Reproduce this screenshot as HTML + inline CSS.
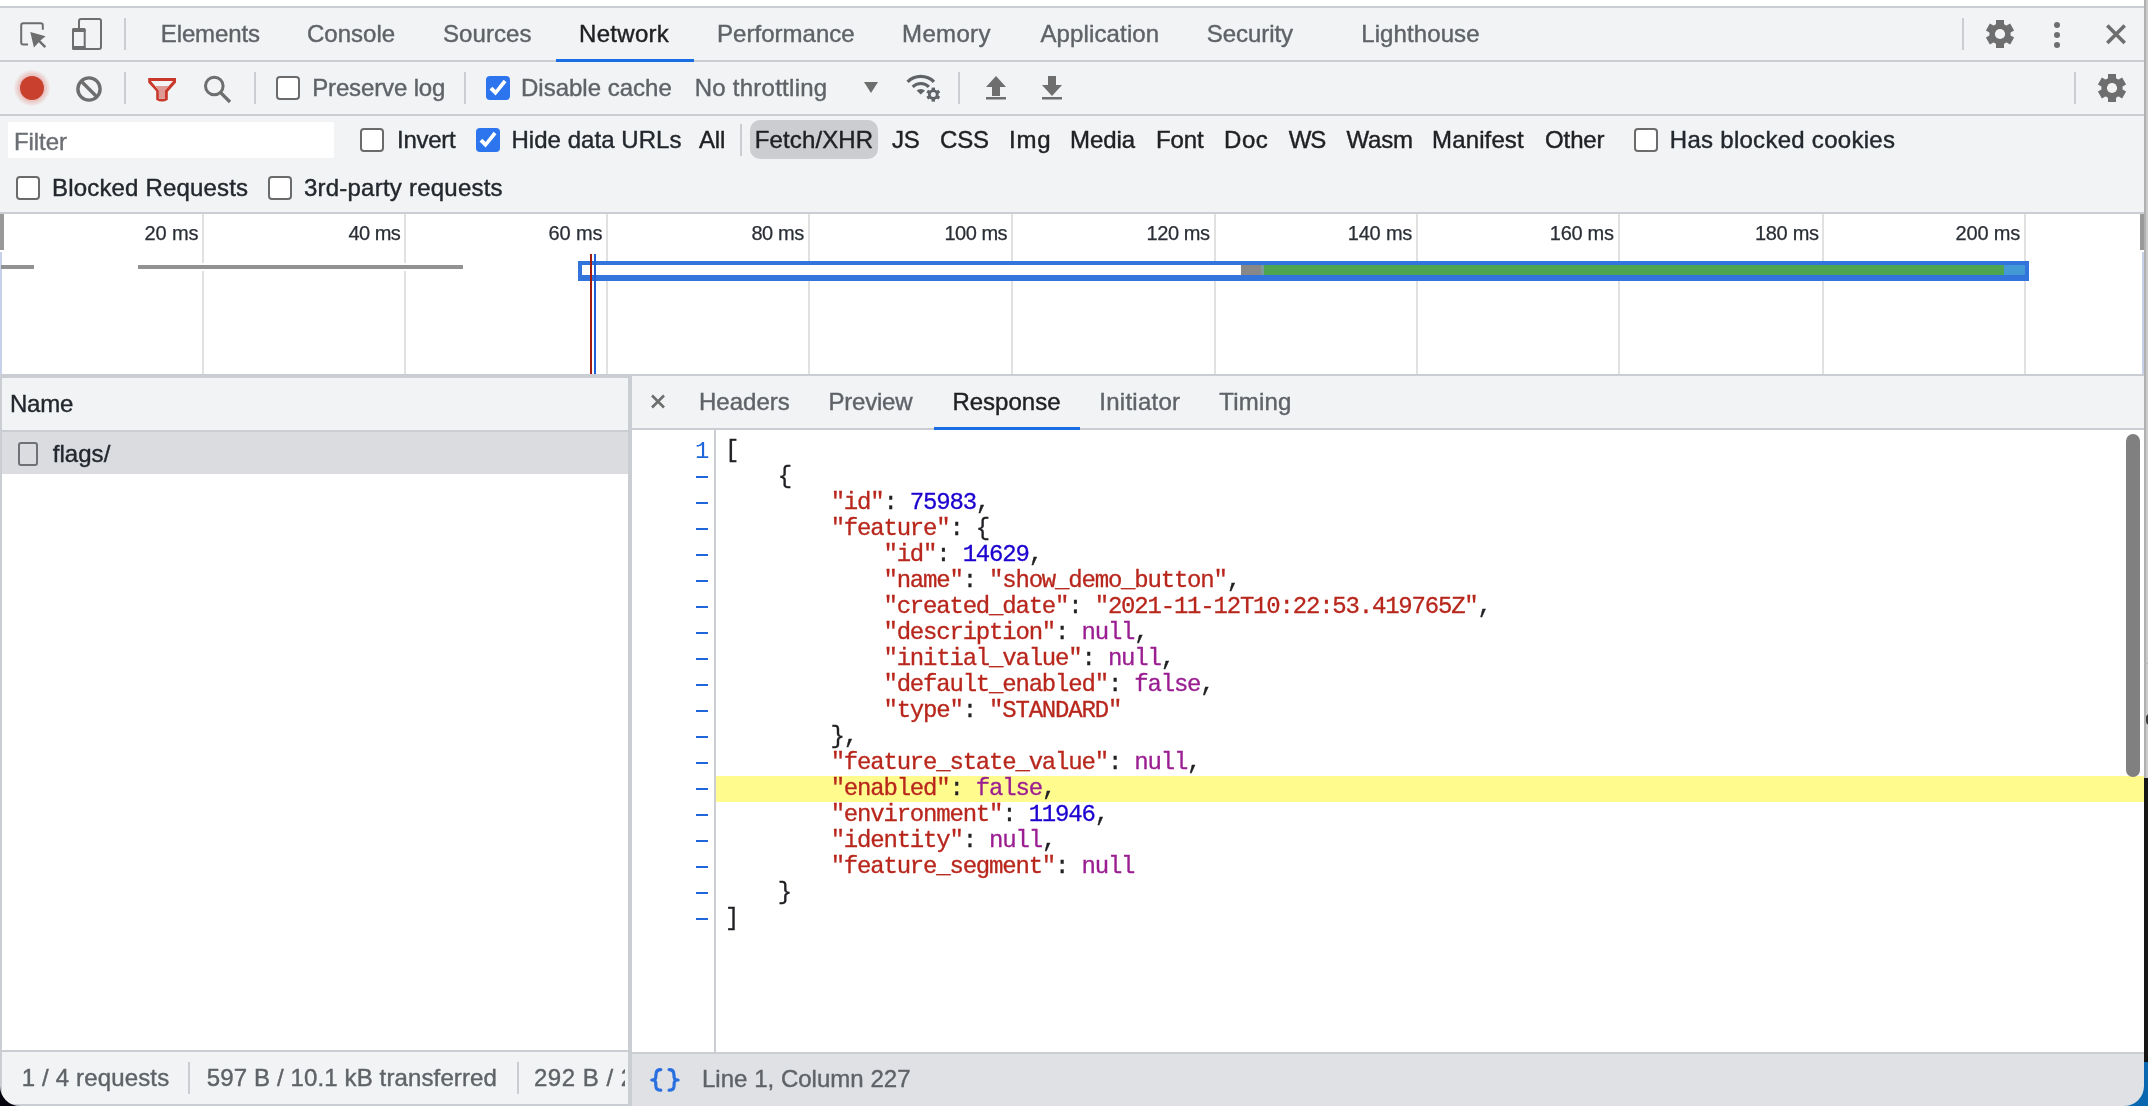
<!DOCTYPE html>
<html><head><meta charset="utf-8">
<style>
*{box-sizing:border-box;margin:0;padding:0}
html,body{width:2148px;height:1106px;overflow:hidden;background:#fff}
body{position:relative;font-family:"Liberation Sans",sans-serif}
#root{position:absolute;left:0;top:0;width:2148px;height:1106px;will-change:transform;opacity:0.999}
.a{position:absolute}
.bg{background:#f1f3f4}
.bd{background:#cacdd1}
.t{position:absolute;white-space:nowrap;font-size:24px;line-height:24px;color:#5f6368;margin-left:-1px;-webkit-text-stroke:0.4px currentColor;letter-spacing:-0.15px}
.dk{color:#202124}
.sl{color:#23282e}
.cb{position:absolute;width:24px;height:24px;border:2px solid #6b6b6b;border-radius:4px;background:#fff}
.cbc{position:absolute;width:24px;height:24px;border-radius:4px;background:#2c75ee}
.tl{position:absolute;white-space:nowrap;font-size:20px;line-height:20px;color:#2a2e35;-webkit-text-stroke:0.25px currentColor}
.gl{position:absolute;width:2px;background:#e1e1e1}
.code{position:absolute;left:725px;top:438px;font-family:"Liberation Mono",monospace;font-size:24px;letter-spacing:-1.2px;line-height:26px;color:#202124;-webkit-text-stroke:0.3px currentColor}
.code div{height:26px;white-space:pre}
.k{color:#b8261c}
.n{color:#1c00cf}
.p{color:#9a1e91}
.ln{position:absolute;left:696px;width:12px;height:2px;background:#1f66db}
</style></head><body><div id="root">

<!-- top white band + outer frame -->
<div class="a bd" style="left:0;top:6px;width:2144px;height:2px"></div>

<!-- TAB BAR -->
<div class="a bg" style="left:0;top:8px;width:2144px;height:52px"></div>
<div class="a bd" style="left:0;top:60px;width:2144px;height:2px"></div>
<svg class="a" style="left:0;top:0" width="140" height="60" viewBox="0 0 140 60">
  <path d="M28 44.6H23.2a2 2 0 0 1-2-2V25.2a2 2 0 0 1 2-2h17.6a2 2 0 0 1 2 2v4.6" fill="none" stroke="#6e6e6e" stroke-width="2"/>
  <path d="M30.3 31.9L45.6 36.2L40.4 40.6L46.2 46.2L44.4 48L38.8 42.3L33.9 47.6Z" fill="#6e6e6e"/>
  <rect x="79" y="19" width="22" height="30" rx="2" fill="none" stroke="#6e6e6e" stroke-width="2"/>
  <rect x="73" y="29" width="11.7" height="20" rx="2" fill="#f1f3f4" stroke="#6e6e6e" stroke-width="2"/>
  <rect x="72" y="28" width="13.7" height="4" rx="1.5" fill="#6e6e6e"/>
  <rect x="72" y="46" width="13.7" height="4" rx="1.5" fill="#6e6e6e"/>
  <rect x="124" y="18" width="2" height="32" fill="#cacdd1"/>
</svg>
<div class="t" style="left:161.8px;top:22px;letter-spacing:-0.122px">Elements</div>
<div class="t" style="left:308px;top:22px;letter-spacing:0.017px">Console</div>
<div class="t" style="left:443.9px;top:22px;letter-spacing:0.1px">Sources</div>
<div class="t dk" style="left:580px;top:22px;letter-spacing:0.299px">Network</div>
<div class="t" style="left:718px;top:22px;letter-spacing:0.03px">Performance</div>
<div class="t" style="left:903.1px;top:22px;letter-spacing:0.33px">Memory</div>
<div class="t" style="left:1041.4px;top:22px;letter-spacing:0.14px">Application</div>
<div class="t" style="left:1207.7px;top:22px;letter-spacing:-0.049px">Security</div>
<div class="t" style="left:1362.2px;top:22px;letter-spacing:0.105px">Lighthouse</div>
<div class="a" style="left:556px;top:59px;width:138px;height:3px;background:#1a6ee3"></div>
<svg class="a" style="left:1950px;top:8px" width="194" height="52" viewBox="1950 8 194 52">
  <rect x="1962" y="18" width="2" height="32" fill="#cacdd1"/>
  <g transform="translate(2000 34)" fill="#6e6e6e"><circle r="10.6"/><rect x="-4" y="-14" width="8" height="28"/><rect x="-4" y="-14" width="8" height="28" transform="rotate(60)"/><rect x="-4" y="-14" width="8" height="28" transform="rotate(120)"/><circle r="5.1" fill="#f1f3f4"/></g>
  <circle cx="2057" cy="25" r="3" fill="#6e6e6e"/>
  <circle cx="2057" cy="35" r="3" fill="#6e6e6e"/>
  <circle cx="2057" cy="45" r="3" fill="#6e6e6e"/>
  <path d="M2107.3 25.5L2124.7 42.9M2124.7 25.5L2107.3 42.9" stroke="#6e6e6e" stroke-width="3.6"/>
</svg>

<!-- TOOLBAR -->
<div class="a bg" style="left:0;top:62px;width:2144px;height:52px"></div>
<div class="a bd" style="left:0;top:114px;width:2144px;height:2px"></div>
<svg class="a" style="left:0;top:62px" width="1100" height="52" viewBox="0 62 1100 52">
  <defs><radialGradient id="rg"><stop offset="0.62" stop-color="#d04030" stop-opacity="0.32"/><stop offset="1" stop-color="#d93025" stop-opacity="0"/></radialGradient></defs>
  <circle cx="32" cy="88" r="18.5" fill="url(#rg)"/>
  <circle cx="32" cy="88" r="12" fill="#c9402f"/>
  <circle cx="89" cy="89" r="11.1" fill="none" stroke="#6e6e6e" stroke-width="3.4"/>
  <path d="M81 81L97 97" stroke="#6e6e6e" stroke-width="3.4"/>
  <rect x="124" y="72" width="2" height="32" fill="#cacdd1"/>
  <path d="M148.2 78H176V82.5L167.8 91.7V99.7Q162 103.4 156.2 99.7V91.2L148.2 82.5Z" fill="#c9382b"/>
  <path d="M150.9 80.9H173.1L165 90.3V98.8H158.9V90.5Z" fill="#f1f3f4"/>
  <path d="M155.15 86H168.7L165 90.3V98.8H158.9V90.5Z" fill="#dd9a94"/>
  <circle cx="214.3" cy="86" r="8.8" fill="none" stroke="#6e6e6e" stroke-width="3"/>
  <path d="M220.5 92.5L230 102" stroke="#6e6e6e" stroke-width="3.2"/>
  <rect x="254" y="72" width="2" height="32" fill="#cacdd1"/>
  <rect x="464" y="72" width="2" height="32" fill="#cacdd1"/>
  <path d="M864 82H878L871 93Z" fill="#6e6e6e"/>
  <g fill="#5f6368">
    <path d="M906.45 80.65A20.3 20.3 0 0 1 935.15 80.65L932.82 82.98A17 17 0 0 0 908.78 82.98Z"/>
    <path d="M911.61 85.81A13 13 0 0 1 929.99 85.81L927.87 87.93A10 10 0 0 0 913.73 87.93Z"/>
    <path d="M920.8 94.6L916.6 90.6A6 6 0 0 1 925 90.6Z"/>
  </g>
  <circle cx="933.3" cy="94.6" r="8.6" fill="#f1f3f4"/>
  <g transform="translate(933.3 94.6)" fill="#5f6368">
    <circle r="5.3"/>
    <rect x="-1.7" y="-7" width="3.4" height="14"/>
    <rect x="-1.7" y="-7" width="3.4" height="14" transform="rotate(60)"/>
    <rect x="-1.7" y="-7" width="3.4" height="14" transform="rotate(120)"/>
    <circle r="2.5" fill="#f1f3f4"/>
  </g>
  <rect x="958" y="72" width="2" height="32" fill="#cacdd1"/>
  <path d="M996 76L1006 87H1000V96H992V87H986Z" fill="#6e6e6e"/>
  <rect x="986" y="97" width="20" height="2.5" fill="#6e6e6e"/>
  <path d="M1048 76H1056V85H1062L1052 96L1042 85H1048Z" fill="#6e6e6e"/>
  <rect x="1042" y="97" width="20" height="2.5" fill="#6e6e6e"/>
</svg>
<div class="cb" style="left:276px;top:76px"></div>
<div class="t" style="left:313.2px;top:76px;letter-spacing:-0.14px">Preserve log</div>
<div class="cbc" style="left:486px;top:76px"><svg width="24" height="24"><path d="M3.5 13.5L6.4 10.8L9.6 13.9L17.6 3.7L20.5 6.3L9.6 19.4Z" fill="#fff"/></svg></div>
<div class="t" style="left:522px;top:76px;letter-spacing:0.001px">Disable cache</div>
<div class="t" style="left:695.7px;top:76px;letter-spacing:0.258px">No throttling</div>
<svg class="a" style="left:2060px;top:62px" width="84" height="52" viewBox="2060 62 84 52">
  <rect x="2074" y="72" width="2" height="32" fill="#cacdd1"/>
  <g transform="translate(2112 88)" fill="#6e6e6e"><circle r="10.6"/><rect x="-4" y="-14" width="8" height="28"/><rect x="-4" y="-14" width="8" height="28" transform="rotate(60)"/><rect x="-4" y="-14" width="8" height="28" transform="rotate(120)"/><circle r="5.1" fill="#f1f3f4"/></g>
</svg>

<!-- FILTER BAR -->
<div class="a bg" style="left:0;top:116px;width:2144px;height:96px"></div>
<div class="a bd" style="left:0;top:212px;width:2144px;height:2px"></div>
<div class="a" style="left:8px;top:122px;width:326px;height:36px;background:#fff"></div>
<div class="t" style="left:15px;top:130px;letter-spacing:-0.07px;color:#6b6f74">Filter</div>
<div class="cb" style="left:360px;top:128px"></div>
<div class="t sl" style="left:398px;top:128px;letter-spacing:-0.25px">Invert</div>
<div class="cbc" style="left:476px;top:128px"><svg width="24" height="24"><path d="M3.5 13.5L6.4 10.8L9.6 13.9L17.6 3.7L20.5 6.3L9.6 19.4Z" fill="#fff"/></svg></div>
<div class="t sl" style="left:512.4px;top:128px;letter-spacing:0.049px">Hide data URLs</div>
<div class="t dk" style="left:700px;top:128px;letter-spacing:-0.15px">All</div>
<div class="a bd" style="left:740px;top:124px;width:2px;height:32px"></div>
<div class="a" style="left:750px;top:120px;width:128px;height:39px;border-radius:10px;background:#cbcdd1"></div>
<div class="t dk" style="left:755.8px;top:128px;letter-spacing:0.125px">Fetch/XHR</div>
<div class="t dk" style="left:893px;top:128px;letter-spacing:-0.15px">JS</div>
<div class="t dk" style="left:941px;top:128px;letter-spacing:-0.15px">CSS</div>
<div class="t dk" style="left:1010px;top:128px;letter-spacing:0.85px">Img</div>
<div class="t dk" style="left:1071px;top:128px;letter-spacing:-0.05px">Media</div>
<div class="t dk" style="left:1157px;top:128px;letter-spacing:-0.15px">Font</div>
<div class="t dk" style="left:1225px;top:128px;letter-spacing:0.55px">Doc</div>
<div class="t dk" style="left:1289.8px;top:128px;letter-spacing:-1.15px">WS</div>
<div class="t dk" style="left:1347.5px;top:128px;letter-spacing:-0.183px">Wasm</div>
<div class="t dk" style="left:1433.1px;top:128px;letter-spacing:0.122px">Manifest</div>
<div class="t dk" style="left:1546.1px;top:128px;letter-spacing:-0.15px">Other</div>
<div class="cb" style="left:1634px;top:128px"></div>
<div class="t sl" style="left:1670.8px;top:128px;letter-spacing:0.277px">Has blocked cookies</div>
<div class="cb" style="left:16px;top:176px"></div>
<div class="t sl" style="left:53px;top:176px;letter-spacing:0.177px">Blocked Requests</div>
<div class="cb" style="left:268px;top:176px"></div>
<div class="t sl" style="left:304.9px;top:176px;letter-spacing:0.232px">3rd-party requests</div>

<!-- TIMELINE -->
<div id="tl" class="a" style="left:0;top:214px;width:2144px;height:160px;background:#fff"></div>
<div class="a" style="left:0;top:214px;width:4px;height:36px;background:#999"></div>
<div class="a" style="left:2140px;top:214px;width:4px;height:36px;background:#999"></div>
<div class="a" style="left:0;top:252px;width:2px;height:122px;background:#c5d2ea"></div>
<div class="a" style="left:2142px;top:252px;width:2px;height:122px;background:#c5d2ea"></div>
<div class="gl" style="left:202px;top:214px;height:160px"></div>
<div class="gl" style="left:404px;top:214px;height:160px"></div>
<div class="gl" style="left:606px;top:214px;height:160px"></div>
<div class="gl" style="left:808px;top:214px;height:160px"></div>
<div class="gl" style="left:1011px;top:214px;height:160px"></div>
<div class="gl" style="left:1214px;top:214px;height:160px"></div>
<div class="gl" style="left:1416px;top:214px;height:160px"></div>
<div class="gl" style="left:1618px;top:214px;height:160px"></div>
<div class="gl" style="left:1822px;top:214px;height:160px"></div>
<div class="gl" style="left:2024px;top:214px;height:160px"></div>
<div class="tl" style="left:144.5px;top:223px;letter-spacing:-0.1px">20 ms</div>
<div class="tl" style="left:348.4px;top:223px;letter-spacing:-0.5px">40 ms</div>
<div class="tl" style="left:548.5px;top:223px;letter-spacing:-0.125px">60 ms</div>
<div class="tl" style="left:751.4px;top:223px;letter-spacing:-0.4px">80 ms</div>
<div class="tl" style="left:944.5px;top:223px;letter-spacing:-0.5px">100 ms</div>
<div class="tl" style="left:1146.4px;top:223px;letter-spacing:-0.38px">120 ms</div>
<div class="tl" style="left:1347.7px;top:223px;letter-spacing:-0.18px">140 ms</div>
<div class="tl" style="left:1549.8px;top:223px;letter-spacing:-0.28px">160 ms</div>
<div class="tl" style="left:1755px;top:223px;letter-spacing:-0.32px">180 ms</div>
<div class="tl" style="left:1955.6px;top:223px;letter-spacing:-0.18px">200 ms</div>
<div class="a" style="left:2px;top:263px;width:34px;height:8px;background:#fff"></div>
<div class="a" style="left:1px;top:265px;width:33px;height:4px;background:#929292"></div>
<div class="a" style="left:136px;top:263px;width:329px;height:8px;background:#fff"></div>
<div class="a" style="left:138px;top:265px;width:325px;height:4px;background:#929292"></div>
<div class="a" style="left:578px;top:261px;width:1451px;height:20px;background:#3273dc"></div>
<div class="a" style="left:582px;top:265px;width:659px;height:10px;background:#fff"></div>
<div class="a" style="left:1241px;top:265px;width:20px;height:10px;background:#888"></div>
<div class="a" style="left:1261px;top:265px;width:3px;height:10px;background:#7b9a9a"></div>
<div class="a" style="left:1264px;top:265px;width:740px;height:10px;background:#4ea54f"></div>
<div class="a" style="left:2004px;top:265px;width:21px;height:10px;background:#4399d6"></div>
<div class="a" style="left:590px;top:254px;width:2px;height:120px;background:#a31b0f"></div>
<div class="a" style="left:594px;top:254px;width:2px;height:120px;background:#1f5fd6"></div>

<!-- SPLIT -->
<div class="a bd" style="left:0;top:374px;width:2144px;height:2px"></div>
<div class="a bd" style="left:0;top:376px;width:628px;height:2px"></div>
<div class="a bd" style="left:628px;top:376px;width:4px;height:730px"></div>
<div class="a bd" style="left:0;top:376px;width:2px;height:730px"></div>
<!-- name panel -->
<div class="a bg" style="left:2px;top:378px;width:626px;height:52px"></div>
<div class="a bd" style="left:2px;top:430px;width:626px;height:2px"></div>
<div class="t sl" style="left:10.9px;top:392px;letter-spacing:-0.15px">Name</div>
<div class="a" style="left:2px;top:432px;width:626px;height:42px;background:#dadce0"></div>
<div class="a" style="left:18px;top:442px;width:20px;height:24px;border:2px solid #6e7277;border-radius:3px"></div>
<div class="t sl" style="left:53.8px;top:442px;letter-spacing:0.03px">flags/</div>
<div class="a" style="left:2px;top:474px;width:626px;height:576px;background:#fff"></div>
<div class="a bd" style="left:2px;top:1050px;width:626px;height:2px"></div>
<div class="a bg" style="left:2px;top:1052px;width:626px;height:52px"></div>
<div class="a bd" style="left:0;top:1104px;width:632px;height:2px"></div>
<div class="t" style="left:22.8px;top:1066px;letter-spacing:0.15px">1 / 4 requests</div>
<div class="a bd" style="left:188px;top:1062px;width:2px;height:32px"></div>
<div class="t" style="left:207.8px;top:1066px;letter-spacing:0.127px">597 B / 10.1 kB transferred</div>
<div class="a bd" style="left:517px;top:1062px;width:2px;height:32px"></div>
<div class="a" style="left:535px;top:1052px;width:89.5px;height:52px;overflow:hidden"><div class="t" style="left:0px;top:14px;letter-spacing:0.5px">292 B / 2.3 kB resources</div></div>

<!-- details panel -->
<div class="a bg" style="left:632px;top:376px;width:1512px;height:52px"></div>
<div class="a bd" style="left:632px;top:428px;width:1512px;height:2px"></div>
<svg class="a" style="left:632px;top:376px" width="60" height="52" viewBox="632 376 60 52"><path d="M652 395.5L664 407.5M664 395.5L652 407.5" stroke="#6e6e6e" stroke-width="2.6"/></svg>
<div class="t" style="left:700px;top:390px;letter-spacing:0.017px">Headers</div>
<div class="t" style="left:829.4px;top:390px;letter-spacing:-0.2px">Preview</div>
<div class="t dk" style="left:953.4px;top:390px;letter-spacing:0.007px">Response</div>
<div class="t" style="left:1100.3px;top:390px;letter-spacing:0.264px">Initiator</div>
<div class="t" style="left:1220.2px;top:390px;letter-spacing:0.21px">Timing</div>
<div class="a" style="left:934px;top:427px;width:146px;height:3px;background:#1a6ee3"></div>

<div class="a bd" style="left:714px;top:430px;width:2px;height:622px"></div>
<div class="a" style="left:716px;top:776px;width:1428px;height:26px;background:#fffb8d"></div>
<div class="a" style="left:695px;top:440px;font-family:'Liberation Mono',monospace;font-size:24px;line-height:24px;color:#1f66db">1</div>
<div id="dashes"></div>
<div class="code">
<div>[</div>
<div>    {</div>
<div>        <span class="k">"id"</span>: <span class="n">75983</span>,</div>
<div>        <span class="k">"feature"</span>: {</div>
<div>            <span class="k">"id"</span>: <span class="n">14629</span>,</div>
<div>            <span class="k">"name"</span>: <span class="k">"show_demo_button"</span>,</div>
<div>            <span class="k">"created_date"</span>: <span class="k">"2021-11-12T10:22:53.419765Z"</span>,</div>
<div>            <span class="k">"description"</span>: <span class="p">null</span>,</div>
<div>            <span class="k">"initial_value"</span>: <span class="p">null</span>,</div>
<div>            <span class="k">"default_enabled"</span>: <span class="p">false</span>,</div>
<div>            <span class="k">"type"</span>: <span class="k">"STANDARD"</span></div>
<div>        },</div>
<div>        <span class="k">"feature_state_value"</span>: <span class="p">null</span>,</div>
<div>        <span class="k">"enabled"</span>: <span class="p">false</span>,</div>
<div>        <span class="k">"environment"</span>: <span class="n">11946</span>,</div>
<div>        <span class="k">"identity"</span>: <span class="p">null</span>,</div>
<div>        <span class="k">"feature_segment"</span>: <span class="p">null</span></div>
<div>    }</div>
<div>]</div>
</div>
<div class="ln" style="top:476px"></div>
<div class="ln" style="top:502px"></div>
<div class="ln" style="top:528px"></div>
<div class="ln" style="top:554px"></div>
<div class="ln" style="top:580px"></div>
<div class="ln" style="top:606px"></div>
<div class="ln" style="top:632px"></div>
<div class="ln" style="top:658px"></div>
<div class="ln" style="top:684px"></div>
<div class="ln" style="top:710px"></div>
<div class="ln" style="top:736px"></div>
<div class="ln" style="top:762px"></div>
<div class="ln" style="top:788px"></div>
<div class="ln" style="top:814px"></div>
<div class="ln" style="top:840px"></div>
<div class="ln" style="top:866px"></div>
<div class="ln" style="top:892px"></div>
<div class="ln" style="top:918px"></div>

<div class="a" style="left:2126px;top:434px;width:14px;height:343px;border-radius:7px;background:#808080"></div>

<div class="a bd" style="left:632px;top:1052px;width:1512px;height:2px"></div>
<div class="a" style="left:632px;top:1054px;width:1512px;height:52px;background:#dfe1e5"></div>
<svg class="a" style="left:640px;top:1058px" width="60" height="42" viewBox="0 0 60 42"><g fill="none" stroke="#2a6fe0" stroke-width="3.2" stroke-linecap="round" stroke-linejoin="round"><path d="M20.8 11.6C17.6 11.6 16.3 12.8 16.1 15.6L15.7 19.6C15.5 21.3 14.3 22 11.8 22C14.3 22 15.5 22.8 15.7 24.6L15.9 28.4C16.1 31 17.6 32.2 20.8 32.2"/><path d="M29.1 11.6C32.3 11.6 33.6 12.8 33.8 15.6L34.2 19.6C34.4 21.3 35.6 22 38.1 22C35.6 22 34.4 22.8 34.2 24.6L34 28.4C33.8 31 32.3 32.2 29.1 32.2"/></g></svg>
<div class="t" style="left:703px;top:1067px;letter-spacing:0.021px">Line 1, Column 227</div>

<!-- right desktop edge -->
<div class="a" style="left:2144px;top:0;width:1.5px;height:778px;background:#b0b0b0"></div>
<div class="a" style="left:2145.5px;top:0;width:2.5px;height:778px;background:#cbcbcb"></div>
<div class="a" style="left:2144px;top:663px;width:4px;height:1px;background:#b8b8b8"></div>
<div class="a" style="left:2146px;top:714px;width:4px;height:11px;border-radius:4px 0 0 4px;background:#3a3a3a"></div>
<div class="a" style="left:2144px;top:778px;width:4px;height:284px;background:#161616"></div>
<div class="a" style="left:2144px;top:1062px;width:4px;height:44px;background:#0a68b0"></div>
<!-- rounded corners -->
<svg class="a" style="left:0;top:1086px" width="20" height="20" viewBox="0 0 20 20"><path d="M0 0A20 20 0 0 0 20 20H0Z" fill="#06050f"/></svg>
<svg class="a" style="left:2124px;top:1086px" width="20" height="20" viewBox="0 0 20 20"><path d="M20 0A20 20 0 0 1 0 20H20Z" fill="#0a68b0"/></svg>
</div></body></html>
